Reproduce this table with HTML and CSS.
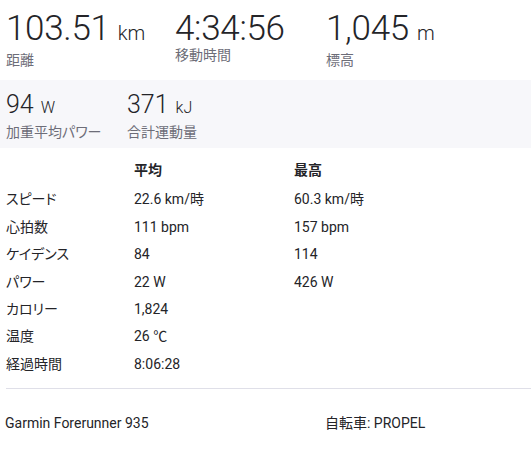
FILE: index.html
```html
<!DOCTYPE html>
<html lang="ja">
<head>
  <meta charset="UTF-8">
  <meta name="viewport" content="width=device-width, initial-scale=1.0">
  <title>アクティビティの統計</title>
  <link rel="stylesheet" href="styles.css">
</head>
<body>
  <ul class="stats primary">
    <li>
      <strong>103.51<abbr>km</abbr></strong>
      <span class="label">距離</span>
    </li>
    <li>
      <strong>4:34:56</strong>
      <span class="label">移動時間</span>
    </li>
    <li>
      <strong>1,045<abbr>m</abbr></strong>
      <span class="label">標高</span>
    </li>
  </ul>

  <ul class="stats secondary">
    <li>
      <strong>94<abbr>W</abbr></strong>
      <span class="label">加重平均パワー</span>
    </li>
    <li>
      <strong>371<abbr>kJ</abbr></strong>
      <span class="label">合計運動量</span>
    </li>
  </ul>

  <table class="more-stats">
    <thead>
      <tr>
        <th></th>
        <th>平均</th>
        <th>最高</th>
      </tr>
    </thead>
    <tbody>
      <tr><td>スピード</td><td>22.6 km/時</td><td>60.3 km/時</td></tr>
      <tr><td>心拍数</td><td>111 bpm</td><td>157 bpm</td></tr>
      <tr><td>ケイデンス</td><td>84</td><td>114</td></tr>
      <tr><td>パワー</td><td>22 W</td><td>426 W</td></tr>
      <tr><td>カロリー</td><td>1,824</td><td></td></tr>
      <tr><td>温度</td><td>26 ℃</td><td></td></tr>
      <tr><td>経過時間</td><td>8:06:28</td><td></td></tr>
    </tbody>
  </table>

  <div class="device">
    <div>Garmin Forerunner 935</div>
    <div>自転車: PROPEL</div>
  </div>
</body>
</html>
```

FILE: styles.css
```css
body {
  margin: 0;
  font-family: Roboto, "Noto Sans CJK JP", sans-serif;
  font-feature-settings: "palt";
  color: #242428;
  background-color: #fff;
}

.stats {
  list-style: none;
  margin: 0;
  padding: 0 6px;
  display: grid;
  column-gap: 30px;
}

.stats li {
  display: flex;
  flex-direction: column;
}

.stats strong {
  font-weight: 300;
  white-space: nowrap;
}

.stats abbr {
  margin-left: 8px;
  text-decoration: none;
}

.stats .label {
  color: #6d6d78;
  font-size: 14px;
  line-height: 18px;
  white-space: nowrap;
}

.primary {
  grid-template-columns: 139px 121px auto;
  height: 80px;
  padding-top: 11px;
  box-sizing: border-box;
}

.primary strong {
  font-size: 35px;
  line-height: 35px;
  letter-spacing: -0.3px;
}

.primary abbr {
  font-size: 20px;
  letter-spacing: 0;
}

.secondary {
  grid-template-columns: 91px auto;
  height: 68px;
  padding-top: 10px;
  box-sizing: border-box;
  background-color: #f7f7fa;
}

.secondary strong {
  font-size: 25px;
  line-height: 30px;
}

.secondary abbr {
  font-size: 16px;
  margin-left: 7px;
}

.more-stats {
  border-collapse: collapse;
  margin: 9px 6px 0;
  font-size: 14px;
}

.more-stats th,
.more-stats td {
  padding: 4px 0;
  line-height: 19.4px;
  text-align: left;
}

.more-stats th {
  font-weight: 700;
}

.more-stats tbody tr:first-child td {
  padding-top: 6px;
}

.more-stats td:first-child,
.more-stats th:first-child {
  width: 128px;
}

.more-stats td:nth-child(2),
.more-stats th:nth-child(2) {
  width: 160px;
}

.device {
  margin: 10px 0 0 6px;
  border-top: 1px solid #dfdfe8;
  padding: 24px 0 0;
  display: grid;
  grid-template-columns: 319px 1fr;
  font-size: 14px;
  line-height: 20px;
}

.device div:first-child {
  margin-left: -1px;
}
```
